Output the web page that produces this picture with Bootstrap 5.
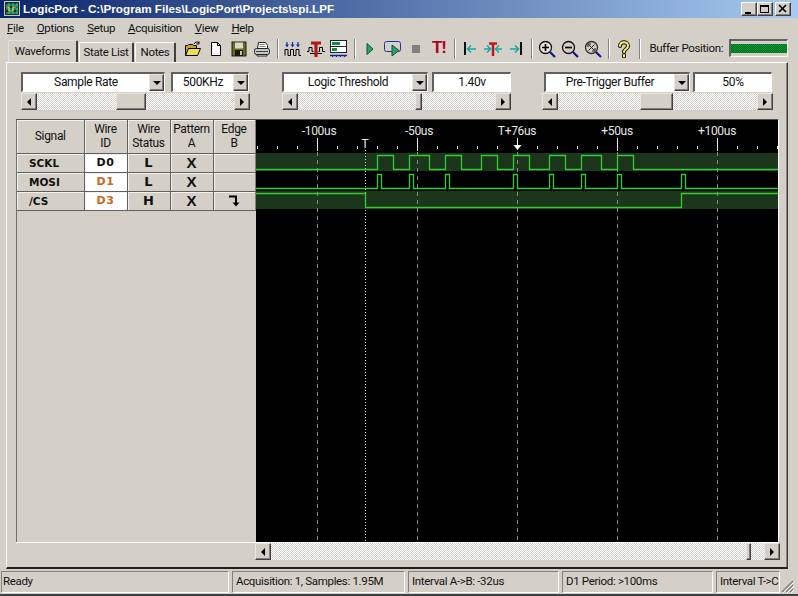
<!DOCTYPE html>
<html lang="en">
<head>
<meta charset="utf-8">
<title>LogicPort</title>
<link rel="stylesheet" href="https://cdn.jsdelivr.net/npm/bootstrap@5.3.0/dist/css/bootstrap.min.css">
<script src="https://cdn.jsdelivr.net/npm/bootstrap@5.3.0/dist/js/bootstrap.bundle.min.js"></script>
<style>
html,body{margin:0;padding:0;width:798px;height:596px;overflow:hidden;background:#d4d0c8;}
body{font-family:Roboto,"Liberation Sans",Arial,sans-serif;font-size:11.5px;letter-spacing:-.33px;color:#111;line-height:1.1;}
.win{width:798px;height:596px;border-bottom:2px solid #404040;background:#d4d0c8;}
.titlebar{height:18px;background:linear-gradient(90deg,#0a246a,#a6caf0);color:#fff;font-family:"Liberation Sans",Arial,sans-serif;font-weight:700;font-size:11.7px;letter-spacing:0;padding-left:4px;gap:3px;}
.titlebar svg{flex:none;}
.wbtn{width:16px;height:14px;background:#d4d0c8;border:1px solid;border-color:#fff #404040 #404040 #fff;box-shadow:inset -1px -1px #808080;}
.wbtns{margin-left:auto;padding-right:7px;gap:0;}
.wbtns .wbtn:nth-child(2){margin-right:2px;}
.menubar{height:20px;padding:0 0 0 7px;}
.menubar span{margin-right:13px;}
.menubar u{text-decoration:underline;}
.toprow{height:24px;}
.tabset{padding-left:8px;border:0;align-items:flex-end;width:181.5px;flex:none;gap:1px;flex-wrap:nowrap;}
.tabset .nav-link{font-size:11.5px;color:#111;background:#d4d0c8;border:0;border-top:1px solid #fff;border-left:1px solid #fff;border-right:2px solid #404040;border-radius:2px 2px 0 0;padding:0;height:20px;display:flex;align-items:center;justify-content:center;margin:0;}
.tabset .nav-link.active{background:#d4d0c8;color:#111;height:22px;border-right-color:#404040;}
.t1{width:70px;}.t2{width:55px;}.t3{width:41px;}
.tools{height:24px;align-items:center;padding-bottom:3px;}
.tcell{width:23px;height:20px;display:flex;align-items:center;justify-content:center;flex:none;}
.tsep{width:8px;height:20px;flex:none;position:relative;}
.tsep::after{content:"";position:absolute;left:3px;top:0;height:20px;width:2px;background:#fff;border-left:1px solid #808080;}
.tx{color:#b00020;font-family:"Liberation Sans",Arial,sans-serif;font-weight:700;font-size:17px;letter-spacing:-1px;}
.buflabel{font-size:11.5px;margin-left:6px;width:80px;flex:none;white-space:nowrap;}
.bufbox{width:59px;height:18px;border:1px solid;border-color:#606060 #fff #fff #606060;border-top-width:2px;border-left-width:2px;background:#d4d0c8;padding:3px 0 3px;margin-top:-2px;margin-left:-1px;}
.buffill{height:100%;background:repeating-conic-gradient(#00a030 0 25%,#006a20 0 50%) 0 0/2px 2px;}
.pane{margin-left:6px;width:782px;height:507px;border-top:1px solid #fff;border-left:1px solid #fff;border-right:1px solid #404040;border-bottom:2px solid #202020;box-shadow:inset -1px 0 #808080;}
.ctrlrow{padding:9px 0 0 14px;height:56px;}
.grp1{width:229px;}.grp2{width:229px;margin-left:32px;}.grp3{width:231px;margin-left:31px;}
.combo{height:20px;margin-bottom:1px;}
.field{background:#fff;border:1px solid;border-color:#606060 #fff #fff #606060;border-top-width:2px;border-left-width:2px;height:20px;font-size:12px;min-width:0;position:relative;display:flex;align-items:center;justify-content:center;flex:none;}
.field.pick{padding-right:15px;}
.g1a{width:144px;margin-right:6px;}.g1b{width:78px;}
.g2a{width:146px;margin-right:4px;}.g2b{width:79px;}
.g3a{width:146px;margin-left:2px;margin-right:3px;}.g3b{width:79px;}
.drop{position:absolute;right:0;top:0;width:15px;height:17px;}
.raised{background:#d4d0c8;border:1px solid;border-color:#e8e6e0 #404040 #404040 #e8e6e0;box-shadow:inset -1px -1px #808080;display:flex;align-items:center;justify-content:center;flex:none;}
.sbar{height:17px;}
.sbar .raised{width:16px;height:17px;}
.track{flex:1 1 auto;height:17px;min-width:0;background:repeating-conic-gradient(#d4d0c8 0 25%,#fff 0 50%) 0 0/2px 2px;display:flex;}
.thumbx{flex:none;}
.arrow-d{width:0;height:0;border-left:4px solid transparent;border-right:4px solid transparent;border-top:4px solid #000;}
.arrow-l{width:0;height:0;border-top:4px solid transparent;border-bottom:4px solid transparent;border-right:4px solid #000;}
.arrow-r{width:0;height:0;border-top:4px solid transparent;border-bottom:4px solid transparent;border-left:4px solid #000;}
.stage{margin-left:9px;width:763px;height:424px;border-top:1px solid #505050;border-bottom:1px solid #fff;border-right:1px solid #fff;}
.sidepanel{width:240px;flex:none;height:100%;border-left:1px solid #707070;}
.table.sigtable{width:238px;table-layout:fixed;margin:0;border-collapse:collapse;--bs-table-bg:#d4d0c8;--bs-table-color:#111;}
.table.sigtable>:not(caption)>*>*{padding:0;text-align:center;vertical-align:middle;border:1px solid #606060;background:#d4d0c8;line-height:1.1;box-shadow:inset 1px 1px #f4f2ee;height:19px;}
.table.sigtable>thead>tr>th{font-weight:400;font-size:12px;line-height:14px;height:33px;border-top:0;}
.table.sigtable>:not(caption)>*>*:first-child{border-left:0;}
.table.sigtable>:not(caption)>*>*:last-child{border-right:1px solid #808080;}
.table.sigtable>tbody>tr>td.sigcell{font:700 10.5px "DejaVu Sans",sans-serif;letter-spacing:0;text-align:left;padding-left:12px;}
.table.sigtable>tbody>tr>td.idc{background:#fff;font:700 11px "DejaVu Sans",sans-serif;letter-spacing:.5px;}
.table.sigtable>tbody>tr>td.idc.orng{color:#c8691e;}
.table.sigtable>tbody>tr>td.lvl{font:700 13px "DejaVu Sans",sans-serif;letter-spacing:0;}
.table.sigtable>tbody>tr>td.xmark{font:700 15px "Liberation Sans",sans-serif;letter-spacing:0;}
.c1{width:67px;}.c2{width:43px;}.c3{width:43px;}.c4{width:43px;}.c5{width:42px;}
.graph{width:522px;height:422px;background:#000;display:block;flex:none;}
.graph text{font-family:Roboto,"Liberation Sans",Arial,sans-serif;font-size:12px;letter-spacing:-.3px;fill:#e6e6e6;}
.hrow{margin-left:248px;width:525px;}
.statusbar{height:23px;padding:1px 1px 0 1px;margin-top:1px;gap:3px;position:relative;}
.stp{height:22px;border:1px solid;border-color:#808080 #fff #fff #808080;padding:3px 2px 0 1px;font-size:11.5px;white-space:nowrap;overflow:hidden;flex:none;}
.s1{width:228px;}.s2{width:173px;padding-left:3px;}.s3{width:151px;padding-left:3px;}.s4{width:151px;padding-left:3px;}.s5{width:64px;padding-left:3px;}
.grip{position:absolute;right:4px;bottom:0;}
</style>
</head>
<body>
<div class="win">
  <div class="titlebar d-flex align-items-center">
    <svg width="16" height="16" viewBox="0 0 16 16"><rect x=".5" y=".5" width="15" height="14" fill="#0c3a2a" stroke="#c8c8b8"/><path d="M2 4h12M2 8h12M2 12h12M5 2v11M9 2v11M13 2v11" stroke="#38c8a0" stroke-width="1" fill="none"/><path d="M2 6h3v4h4V6h3" stroke="#f0d040" fill="none"/></svg>
    <span>LogicPort - C:\Program Files\LogicPort\Projects\spi.LPF</span>
    <div class="wbtns d-flex align-items-center">
      <div class="wbtn d-flex align-items-end justify-content-center"><svg width="8" height="9" viewBox="0 0 8 9"><rect x="0" y="6" width="6" height="2" fill="#000"/></svg></div>
      <div class="wbtn d-flex align-items-center justify-content-center"><svg width="10" height="10" viewBox="0 0 10 10"><rect x=".5" y="1.5" width="8" height="7" fill="none" stroke="#000"/><rect x="0" y="1" width="9" height="2" fill="#000"/></svg></div>
      <div class="wbtn d-flex align-items-center justify-content-center"><svg width="10" height="10" viewBox="0 0 10 10"><path d="M1 1l7 7M8 1l-7 7" stroke="#000" stroke-width="1.7"/></svg></div>
    </div>
  </div>
  <div class="menubar d-flex align-items-center">
    <span><u>F</u>ile</span><span><u>O</u>ptions</span><span><u>S</u>etup</span><span><u>A</u>cquisition</span><span><u>V</u>iew</span><span><u>H</u>elp</span>
  </div>
  <div class="toprow d-flex align-items-end">
    <ul class="nav nav-tabs tabset">
      <li class="nav-item"><a class="nav-link active t1" href="#">Waveforms</a></li>
      <li class="nav-item"><a class="nav-link t2" href="#">State List</a></li>
      <li class="nav-item"><a class="nav-link t3" href="#">Notes</a></li>
    </ul>
    <div class="tools d-flex">
      <div class="tcell"><svg width="18" height="16" viewBox="0 0 18 16"><path d="M1.500 14.500V4.500h2l1-1h4l1 1h3v3" fill="#b8a830" stroke="#000"/><path d="M1.500 14.500l3-7h12l-3 7z" fill="#f0e050" stroke="#000"/><path d="M10 3c1-2 3-2.500 5-1.500M15 .5v2.500h-2.500" fill="none" stroke="#000"/></svg></div>
      <div class="tcell"><svg width="14" height="16" viewBox="0 0 14 16"><path d="M2.500 1.500h6l3 3v10h-9z" fill="#fff" stroke="#000"/><path d="M8.500 1.500v3h3" fill="none" stroke="#000"/></svg></div>
      <div class="tcell"><svg width="16" height="16" viewBox="0 0 16 16"><rect x="1" y="1" width="14" height="14" fill="#6b6b20" stroke="#202010"/><rect x="4" y="1.500" width="8" height="6" fill="#d8d8c8"/><rect x="4" y="9" width="8" height="6" fill="#181808"/><rect x="9" y="10" width="2" height="4" fill="#c8c8b8"/></svg></div>
      <div class="tcell"><svg width="18" height="16" viewBox="0 0 18 16"><path d="M5.500 1.500h7l2 3v3h-10z" fill="#fff" stroke="#202020"/><path d="M6.500 3.500h5M6.500 5.500h6" stroke="#808080"/><rect x="1.500" y="7.500" width="15" height="6" rx="2" fill="#c8c8c8" stroke="#202020"/><path d="M3 10.500h12" stroke="#404040"/><path d="M4 13.500h10v1.500H4z" fill="#fff" stroke="#202020"/></svg></div>
      <div class="tsep"></div>
      <div class="tcell"><svg width="18" height="16" viewBox="0 0 18 16"><path d="M3 1v4M8.500 1v4M14 1v4" stroke="#1030b0" stroke-width="1.200"/><path d="M1.500 3.500L3 6l1.500-2.500M7 3.500L8.500 6 10 3.500M12.500 3.500L14 6l1.500-2.500" fill="#1030b0" stroke="#1030b0" stroke-width=".6"/><path d="M1 14.500V8.500h3v6h2.500v-6h3v6h2.500v-6h3v6h2" fill="none" stroke="#000"/></svg></div>
      <div class="tcell"><svg width="18" height="18" viewBox="0 0 18 18"><path d="M0 11.500h2V7.500h3v4h1.500M11.500 11.500h1V7.500h3v4h2.500" fill="none" stroke="#000"/><path d="M3 13.500h5M10 13.500h5" stroke="#000"/><path d="M4 3h10" stroke="#b01818" stroke-width="3"/><path d="M9 3v14" stroke="#b01818" stroke-width="3.200"/></svg></div>
      <div class="tcell"><svg width="18" height="18" viewBox="0 0 18 18"><rect x=".5" y=".5" width="16" height="6" fill="#fff" stroke="#202020"/><rect x="2" y="2" width="8" height="3" fill="#109040"/><rect x=".5" y="6.500" width="16" height="6" fill="#fff" stroke="#202020"/><rect x="2" y="8" width="5" height="3" fill="#109040"/><path d="M0 15.500h17" stroke="#1020a0" stroke-width="1.500"/><path d="M2 16.500h1M6 16.500h1M10 16.500h1M14 16.500h1" stroke="#1020a0"/></svg></div>
      <div class="tsep"></div>
      <div class="tcell"><svg width="10" height="14" viewBox="0 0 10 14"><path d="M2 1.500l6 5.500-6 5.500z" fill="#20a860" stroke="#105040"/></svg></div>
      <div class="tcell"><svg width="20" height="18" viewBox="0 0 20 18"><rect x="1.500" y="1.500" width="16" height="10" rx="2" fill="#d4d0c8" stroke="#2030a0"/><path d="M9 5l7 5.500-7 5.500z" fill="#20a860" stroke="#105040"/></svg></div>
      <div class="tcell"><svg width="10" height="10" viewBox="0 0 10 10"><rect x="1" y="1" width="8" height="8" fill="#808080"/></svg></div>
      <div class="tcell"><span class="tx">T!</span></div>
      <div class="tsep"></div>
      <div class="tcell"><svg width="14" height="16" viewBox="0 0 14 16"><path d="M2 1v13" stroke="#101010" stroke-width="2"/><path d="M5 8h8" stroke="#10a8a8" stroke-width="1.500"/><path d="M8 4.500L4.500 8 8 11.500" fill="none" stroke="#10a8a8" stroke-width="1.500"/></svg></div>
      <div class="tcell"><svg width="18" height="16" viewBox="0 0 18 16"><path d="M0 8h6M12 8h6" stroke="#10a8a8" stroke-width="1.500"/><path d="M3 4.500L6.500 8 3 11.500M15 4.500L11.500 8 15 11.500" fill="none" stroke="#10a8a8" stroke-width="1.500"/><path d="M5 2.500h8" stroke="#c01818" stroke-width="2.500"/><path d="M9 2v13" stroke="#c01818" stroke-width="2.500"/></svg></div>
      <div class="tcell"><svg width="14" height="16" viewBox="0 0 14 16"><path d="M12 1v13" stroke="#101010" stroke-width="2"/><path d="M1 8h8" stroke="#10a8a8" stroke-width="1.500"/><path d="M6 4.500L9.500 8 6 11.500" fill="none" stroke="#10a8a8" stroke-width="1.500"/></svg></div>
      <div class="tsep"></div>
      <div class="tcell"><svg width="18" height="18" viewBox="0 0 18 18"><circle cx="7.500" cy="7.500" r="6" fill="#e8e6e0" stroke="#101010" stroke-width="1.300"/><path d="M4 7.500h7M7.500 4v7" stroke="#000" stroke-width="1.700"/><path d="M12 12l5 5" stroke="#101880" stroke-width="2.200"/></svg></div>
      <div class="tcell"><svg width="18" height="18" viewBox="0 0 18 18"><circle cx="7.500" cy="7.500" r="6" fill="#d4d0c8" stroke="#101010" stroke-width="1.300"/><path d="M4 7.500h7" stroke="#000" stroke-width="1.700"/><path d="M12 12l5 5" stroke="#101880" stroke-width="2.200"/></svg></div>
      <div class="tcell"><svg width="18" height="18" viewBox="0 0 18 18"><circle cx="7.500" cy="7.500" r="6" fill="#d4d0c8" stroke="#303030" stroke-width="1.300"/><path d="M4.500 10.500l6-6M4.500 4.500l6 6M4 7V4h3M11 8v3H8" fill="none" stroke="#202020" stroke-width="1"/><path d="M12 12l5 5" stroke="#101880" stroke-width="2.200"/></svg></div>
      <div class="tsep"></div>
      <div class="tcell"><svg width="14" height="18" viewBox="0 0 14 18"><path d="M3 6c0-5 8-5 8 0 0 3-4 3-4 6M7 15v1.500" fill="none" stroke="#101010" stroke-width="4" stroke-linecap="round"/><path d="M3 6c0-5 8-5 8 0 0 3-4 3-4 6M7 15v1.500" fill="none" stroke="#f8f060" stroke-width="2" stroke-linecap="round"/></svg></div>
      <div class="tsep"></div>
      <div class="buflabel">Buffer Position:</div>
      <div class="bufbox"><div class="buffill"></div></div>
    </div>
  </div>
  <div class="pane">
    <div class="ctrlrow d-flex">
      <div class="grp1">
        <div class="combo d-flex"><div class="field pick g1a">Sample Rate<div class="raised drop"><span class="arrow-d"></span></div></div><div class="field pick g1b">500KHz<div class="raised drop"><span class="arrow-d"></span></div></div></div>
        <div class="sbar d-flex"><div class="raised"><span class="arrow-l"></span></div><div class="track"><div class="raised thumbx" style="margin-left:79px;width:30px"></div></div><div class="raised"><span class="arrow-r"></span></div></div>
      </div>
      <div class="grp2">
        <div class="combo d-flex"><div class="field pick g2a">Logic Threshold<div class="raised drop"><span class="arrow-d"></span></div></div><div class="field g2b">1.40v</div></div>
        <div class="sbar d-flex"><div class="raised"><span class="arrow-l"></span></div><div class="track"><div class="raised thumbx" style="margin-left:117px;width:7px"></div></div><div class="raised"><span class="arrow-r"></span></div></div>
      </div>
      <div class="grp3">
        <div class="combo d-flex"><div class="field pick g3a">Pre-Trigger Buffer<div class="raised drop"><span class="arrow-d"></span></div></div><div class="field g3b">50%</div></div>
        <div class="sbar d-flex"><div class="raised"><span class="arrow-l"></span></div><div class="track"><div class="raised thumbx" style="margin-left:82px;width:33px"></div></div><div class="raised"><span class="arrow-r"></span></div></div>
      </div>
    </div>
    <div class="stage d-flex">
      <div class="sidepanel">
        <table class="table sigtable">
          <colgroup><col class="c1"><col class="c2"><col class="c3"><col class="c4"><col class="c5"></colgroup>
          <thead><tr><th>Signal</th><th>Wire<br>ID</th><th>Wire<br>Status</th><th>Pattern<br>A</th><th>Edge<br>B</th></tr></thead>
          <tbody>
            <tr><td class="sigcell">SCKL</td><td class="idc">D0</td><td class="lvl">L</td><td class="xmark">X</td><td></td></tr>
            <tr><td class="sigcell">MOSI</td><td class="idc orng">D1</td><td class="lvl">L</td><td class="xmark">X</td><td></td></tr>
            <tr><td class="sigcell">/CS</td><td class="idc orng">D3</td><td class="lvl">H</td><td class="xmark">X</td><td><svg width="12" height="12" viewBox="0 0 12 12"><path d="M1 1.500h7V9" fill="none" stroke="#000" stroke-width="2"/><path d="M4.500 7.500h7L8 11.500z" fill="#000"/></svg></td></tr>
          </tbody>
        </table>
      </div>
      <svg class="graph" width="522" height="422" viewBox="256 120 522 422">
        <rect x="256" y="153" width="522" height="18" fill="#1b361b"/>
        <rect x="256" y="191" width="522" height="18" fill="#1b361b"/>
        <g stroke="#8a8a8a" stroke-dasharray="4 4" fill="none">
          <path d="M317.500 152V542M417.500 152V542M517.500 152V542M617.500 152V542M717.500 152V542"/>
        </g>
        <path d="M365.500 150V542" stroke="#e0e0e0" stroke-dasharray="1 2" fill="none"/>
        <g stroke="#e8e8e8" fill="none">
          <path d="M257.500 146v3M277.500 146v3M297.500 146v3M337.500 146v3M357.500 146v3M377.500 146v3M397.500 146v3M437.500 146v3M457.500 146v3M477.500 146v3M497.500 146v3M537.500 146v3M557.500 146v3M577.500 146v3M597.500 146v3M637.500 146v3M657.500 146v3M677.500 146v3M697.500 146v3M737.500 146v3M757.500 146v3M777.500 146v3"/>
          <path d="M317.500 138v13M417.500 138v13M617.500 138v13M717.500 138v13M517.500 138v4"/>
        </g>
        <path d="M517.500 141v4" stroke="#fff"/>
        <path d="M513.500 145h8l-4 5z" fill="#fff"/>
        <text x="319" y="135" text-anchor="middle">-100us</text>
        <text x="419" y="135" text-anchor="middle">-50us</text>
        <text x="517" y="135" text-anchor="middle">T+76us</text>
        <text x="617" y="135" text-anchor="middle">+50us</text>
        <text x="717" y="135" text-anchor="middle">+100us</text>
        <text x="365" y="148" text-anchor="middle">T</text>
        <g fill="none" stroke="#30cc30" stroke-width="1.300">
          <path d="M256 169.500H377.500V155.500H393.500V169.500H409.500V155.500H429.500V169.500H445.500V155.500H461.500V169.500H481.500V155.500H497.500V169.500H513.500V155.500H529.500V169.500H549.500V155.500H565.500V169.500H581.500V155.500H601.500V169.500H617.500V155.500H633.500V169.500H778"/>
          <path d="M256 188.500H377.500V174.500H381.500V188.500H409.500V174.500H413.500V188.500H445.500V174.500H449.500V188.500H513.500V174.500H517.500V188.500H549.500V174.500H553.500V188.500H581.500V174.500H585.500V188.500H617.500V174.500H621.500V188.500H681.500V174.500H685.500V188.500H778"/>
          <path d="M256 193.500H365.500V207.500H681.500V193.500H778"/>
        </g>
      </svg>
    </div>
    <div class="sbar d-flex hrow"><div class="raised"><span class="arrow-l"></span></div><div class="track"><div class="raised thumbx" style="margin-left:475px;width:5px"></div></div><div class="raised"><span class="arrow-r"></span></div></div>
  </div>
  <div class="statusbar d-flex">
    <div class="stp s1">Ready</div>
    <div class="stp s2">Acquisition: 1, Samples: 1.95M</div>
    <div class="stp s3">Interval A-&gt;B: -32us</div>
    <div class="stp s4">D1 Period: &gt;100ms</div>
    <div class="stp s5">Interval T-&gt;C</div>
    <svg class="grip" width="13" height="13" viewBox="0 0 13 13"><path d="M12 1L1 12M12 5L5 12M12 9L9 12" stroke="#808080" stroke-width="1.500"/><path d="M13 2L2 13M13 6L6 13M13 10L10 13" stroke="#fff"/></svg>
  </div>
</div>
</body>
</html>
